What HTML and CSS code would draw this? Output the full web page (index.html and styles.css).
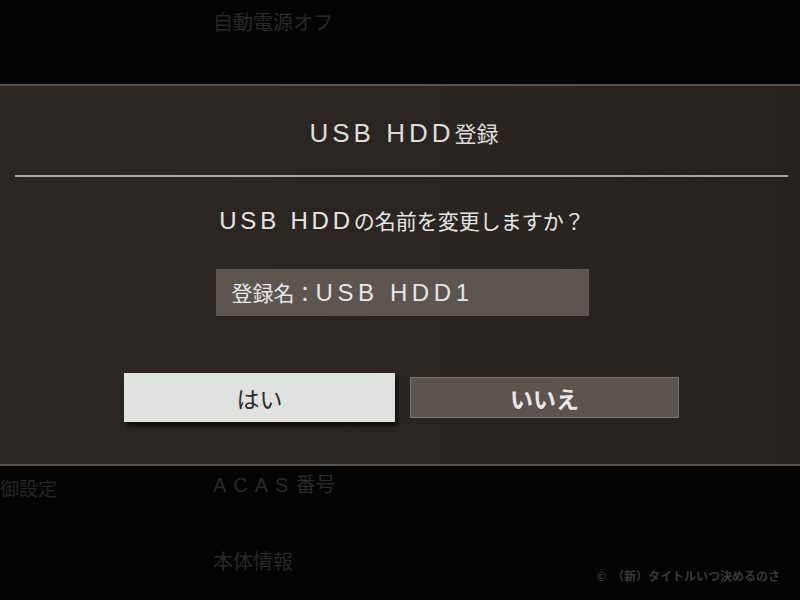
FILE: index.html
```html
<!DOCTYPE html>
<html lang="ja">
<head>
<meta charset="utf-8">
<link rel="stylesheet" href="styles.css">
</head>
<body>
<div class="screen">
  <div class="bg-menu">
    <div class="side">
      <div class="side-item">御設定</div>
    </div>
    <ul class="menu">
      <li class="menu-item">自動電源オフ</li>
      <li class="menu-item gap"></li>
      <li class="menu-item gap"></li>
      <li class="menu-item gap"></li>
      <li class="menu-item gap"></li>
      <li class="menu-item gap"></li>
      <li class="menu-item"><span class="lat">ACAS</span>番号</li>
      <li class="menu-item">本体情報</li>
    </ul>
  </div>
  <div class="footer">©&nbsp;&nbsp;（新）タイトルいつ決めるのさ</div>

  <div class="dialog">
    <div class="title"><span class="lat">USB HDD</span>登録</div>
    <div class="sep"></div>
    <div class="question"><span class="lat">USB HDD</span>の名前を変更しますか？</div>
    <div class="field">登録名：<span class="lat">USB HDD1</span></div>
    <div class="buttons">
      <div class="btn yes">はい</div>
      <div class="btn no">いいえ</div>
    </div>
  </div>
</div>
</body>
</html>
```

FILE: styles.css
```css
* { box-sizing: border-box; margin: 0; padding: 0; }
html, body { width: 800px; height: 600px; background: #030303; overflow: hidden; }
body { font-family: "Noto Sans CJK JP", "Noto Sans", sans-serif; color: #e6e6e4; }
.screen { position: relative; width: 800px; height: 600px; }

.bg-menu { display: flex; }
.side { width: 213px; padding-top: 474px; }
.side-item { font-size: 19px; color: #262422; line-height: 28px; }
.menu { list-style: none; padding-top: 8px; }
.menu-item { height: 77px; line-height: 28px; font-size: 20px; color: #2a2826; }
.menu-item .lat { letter-spacing: 7px; font-weight: 300; }

.footer { position: absolute; right: 20px; bottom: 16px; font-size: 12px; color: #3a3836; font-weight: 700; }

.dialog {
  position: absolute; left: 0; top: 84px; width: 800px; height: 382px;
  background: linear-gradient(90deg, #2d2723 0%, #2a2521 50%, #27221f 100%);
  border-top: 2px solid #57524c; border-bottom: 2px solid #57524c;
  display: flex; flex-direction: column; align-items: center;
}
.title { height: 89px; padding-top: 30px; font-size: 22px; line-height: 32px; color: #deddda; padding-left: 8px; }
.lat { font-family: "Liberation Sans", sans-serif; }
.title .lat { font-size: 26px; letter-spacing: 4px; }
.sep { width: 773px; height: 2px; background: #a9a7a3; margin-left: 3px; }
.question { margin-top: 25px; font-size: 21px; line-height: 36px; padding-left: 4px; }
.question .lat { font-size: 24px; letter-spacing: 3.8px; }
.field {
  margin-top: 30px; margin-left: 4px; width: 373px; height: 47px; background: #5c5550;
  font-size: 21px; line-height: 47px; padding-left: 16px;
}
.field .lat { font-size: 24px; letter-spacing: 4.6px; }
.buttons { margin-top: 57px; margin-left: 3px; display: flex; align-items: center; gap: 15px; }
.btn { display: flex; align-items: center; justify-content: center; font-size: 23px; }
.yes {
  width: 271px; height: 49px; background: #dfe2de; color: #2a2a2a;
  box-shadow: 2px 4px 4px rgba(0,0,0,0.7);
}
.no {
  width: 269px; height: 41px; background: #5b544f; border: 1px solid #7d7771;
  color: #e8e8e6; font-weight: 700;
}
```
